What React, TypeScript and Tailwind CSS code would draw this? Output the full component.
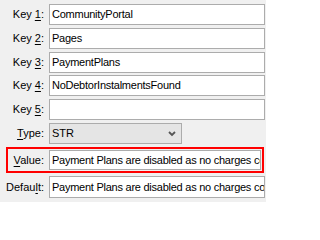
import { ReactNode } from "react";

function Mnemonic({ before, letter, after }: { before: string; letter: string; after: string }) {
  return (
    <span>
      {before}
      <span className="underline underline-offset-[2px]">{letter}</span>
      {after}
    </span>
  );
}

function Field({ value }: { value: string }) {
  return (
    <div className="flex h-full min-w-0 flex-1 items-center overflow-hidden whitespace-nowrap border border-[#acacac] bg-white pl-[2px] tracking-[-0.25px]">
      {value}
    </div>
  );
}

function Row({ label, children, className = "" }: { label: ReactNode; children: ReactNode; className?: string }) {
  return (
    <div className={`flex h-[21px] min-w-0 items-center ${className}`}>
      <div className="w-[45px] shrink-0 pr-[1px] text-right">{label}</div>
      <div className="ml-[4px] flex h-full min-w-0 flex-1">{children}</div>
    </div>
  );
}

export default function App() {
  const keys = ["CommunityPortal", "Pages", "PaymentPlans", "NoDebtorInstalmentsFound", ""];
  const value = "Payment Plans are disabled as no charges could be found";

  return (
    <div
      className="flex h-[202px] w-[266px] flex-col overflow-hidden bg-[#f0f0f0] pt-[4px] pr-[1px] text-[11px] leading-none text-[#000]"
      style={{ fontFamily: '"Liberation Sans", Arial, sans-serif' }}
    >
      {keys.map((k, i) => (
        <Row
          key={i}
          className={i === 0 ? "" : i === 3 ? "mt-[2px]" : "mt-[3px]"}
          label={<Mnemonic before="Key " letter={String(i + 1)} after=":" />}
        >
          <Field value={k} />
        </Row>
      ))}

      <Row className="mt-[3px] h-[20px]" label={<Mnemonic before="" letter="T" after="ype:" />}>
        <div className="flex h-full w-[133px] items-center justify-between border border-[#acacac] bg-[#e5e5e5] pl-[2px] pr-[5px]">
          <span>STR</span>
          <svg width="8" height="6" viewBox="0 0 8 6" className="text-[#555]">
            <path d="M1 1 L4 4 L7 1" fill="none" stroke="currentColor" strokeWidth="1.8" />
          </svg>
        </div>
      </Row>

      <div className="mt-[3px] ml-[6px] mr-[1px] flex h-[26px] min-w-0 items-center border-2 border-[#ff0000] py-[1px] pr-[1px]">
        <div className="w-[37px] shrink-0 pr-[1px] text-right">
          <Mnemonic before="" letter="V" after="alue:" />
        </div>
        <div className="ml-[4px] flex h-full min-w-0 flex-1">
          <Field value={value} />
        </div>
      </div>

      <Row className="mt-[3px] h-[22px]" label={<Mnemonic before="Defau" letter="l" after="t:" />}>
        <Field value={value} />
      </Row>
    </div>
  );
}
